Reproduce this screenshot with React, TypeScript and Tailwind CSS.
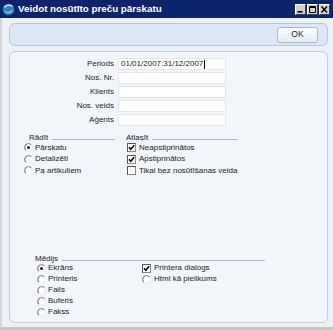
import React from "react";

const fields = [
  { label: "Periods", value: "01/01/2007:31/12/2007", caret: true },
  { label: "Nos. Nr.", value: "" },
  { label: "Klients", value: "" },
  { label: "Nos. veids", value: "" },
  { label: "Aģents", value: "" },
];

function Radio({ checked = false }: { checked?: boolean }) {
  return (
    <svg width="9" height="9" viewBox="0 0 12 12" className="shrink-0">
      <circle cx="6" cy="6" r="5" fill="#ffffff" stroke="#e4e4e4" />
      <path d="M2.46 9.54 A5 5 0 0 1 9.54 2.46" stroke="#7a7a7a" strokeWidth="1.4" fill="none" />
      {checked && <circle cx="6" cy="6" r="2" fill="#111111" />}
    </svg>
  );
}

function Check({ checked = false }: { checked?: boolean }) {
  return (
    <svg width="9" height="9" viewBox="0 0 9 9" className="shrink-0">
      <rect x="0.5" y="0.5" width="8" height="8" fill="#ffffff" stroke="#8a8a8a" />
      <path d="M0.5 8.5 V0.5 H8.5" stroke="#555555" fill="none" />
      {checked && (
        <path d="M2 4.3 L3.8 6.3 L7.2 2.3" stroke="#000000" strokeWidth="1.5" fill="none" />
      )}
    </svg>
  );
}

function SectionHead({ title, className = "" }: { title: string; className?: string }) {
  return (
    <div className={`flex items-end h-[9px] ${className}`}>
      <span className="leading-[9px]">{title}</span>
      <div className="flex-1 ml-[4px] mb-[2px] border-b border-[#aeb6c2]" />
    </div>
  );
}

function WinButton({ kind }: { kind: "min" | "max" | "close" }) {
  return (
    <div className="w-[11px] h-[11px] bg-[#d4d0c8] border-t border-l border-t-white border-l-white border-b border-r border-b-[#404040] border-r-[#404040] flex items-center justify-center">
      <svg width="9" height="9" viewBox="0 0 9 9">
        {kind === "min" && <rect x="1.5" y="6" width="5" height="1.6" fill="#000" />}
        {kind === "max" && (
          <path d="M1.5 1.5 H7.5 V7.5 H1.5 Z M1.5 2.5 H7.5" stroke="#000" fill="none" />
        )}
        {kind === "close" && (
          <path d="M1.5 1.5 L7 7.5 M7 1.5 L1.5 7.5" stroke="#000" strokeWidth="1.4" />
        )}
      </svg>
    </div>
  );
}

export default function App() {
  return (
    <div className="w-[333px] h-[330px] flex flex-col bg-[#edf0f5] font-['Liberation_Sans',Arial,sans-serif] text-[8px] text-[#1c1c1c] overflow-hidden">
      {/* Title bar */}
      <div className="h-[18px] shrink-0 flex items-center bg-[#0b256c] pl-[2px] pr-[2px]">
        <svg width="13" height="13" viewBox="0 0 13 13" className="shrink-0">
          <circle cx="6.5" cy="6.5" r="5.8" fill="#2f7fc4" />
          <path d="M2.5 4.5 C4 2 8 1.5 10.5 3.5" stroke="#bfe6ff" strokeWidth="1.6" fill="none" />
          <path d="M3 8.5 C5 10 8 10 10.5 7.5" stroke="#8fd0f0" strokeWidth="1.2" fill="none" />
        </svg>
        <span className="ml-[3px] text-white font-bold text-[9.8px]">Veidot nosūtīto preču pārskatu</span>
        <div className="ml-auto flex gap-[1px] mr-[1px]">
          <WinButton kind="min" />
          <WinButton kind="max" />
          <WinButton kind="close" />
        </div>
      </div>

      {/* Body */}
      <div className="flex-1 flex flex-col pl-[7px] pr-[5px] pt-[5px] pb-[4px] border-l-2 border-[#d4d8de] border-b-[3px] border-b-[#c4c6ca]">
        {/* Button bar */}
        <div className="h-[23px] shrink-0 flex items-center justify-end pr-[9px] bg-[#dce6f5] border border-[#b6c7e2] rounded-[6px]">
          <div className="w-[41px] h-[16px] flex items-center justify-center rounded-[3px] border border-[#a9b8cf] bg-gradient-to-b from-[#ffffff] to-[#e6ebf2] text-[8.5px] text-[#222]">
            OK
          </div>
        </div>

        {/* Main panel */}
        <div className="mt-[5px] flex-1 flex flex-col bg-[#f2f5fa] border border-[#c3d0e4] rounded-[6px] pt-[6px]">
          <div className="flex flex-col gap-[2px]">
            {fields.map((f) => (
              <div key={f.label} className="flex items-center h-[12px]">
                <span className="w-[104px] text-right">{f.label}</span>
                <div className="ml-[4px] w-[108px] h-[12px] bg-white border border-[#e3e8ef] flex items-center pl-[2px] leading-none">
                  {f.value}
                  {f.caret && <span className="w-[1px] h-[9px] bg-black ml-[1px]" />}
                </div>
              </div>
            ))}
          </div>

          {/* Rādīt / Atlasīt */}
          <div className="mt-[7px] flex">
            <div className="ml-[14px] w-[102px] flex flex-col">
              <SectionHead title="Rādīt" className="pl-[5px] mr-[11px]" />
              {["Pārskatu", "Detalizēti", "Pa artikuliem"].map((t, i) => (
                <div key={t} className="h-[11.5px] flex items-center gap-[2px]">
                  <Radio checked={i === 0} />
                  <span>{t}</span>
                </div>
              ))}
            </div>
            <div className="w-[112px] flex flex-col">
              <SectionHead title="Atlasīt" />
              {[
                ["Neapstiprinātos", true],
                ["Apstiprinātos", true],
                ["Tikai bez nosūtīšanas veida", false],
              ].map(([t, c]) => (
                <div key={t as string} className="h-[11.5px] flex items-center gap-[3px] pl-[1px] whitespace-nowrap">
                  <Check checked={c as boolean} />
                  <span>{t as string}</span>
                </div>
              ))}
            </div>
          </div>

          {/* Mēdijs */}
          <div className="mt-[77px] ml-[25px] w-[230px] flex flex-col">
            <SectionHead title="Mēdijs" />
            <div className="flex pl-[2px]">
              <div className="w-[105px] flex flex-col">
                {["Ekrāns", "Printeris", "Fails", "Buferis", "Fakss"].map((t, i) => (
                  <div key={t} className="h-[11px] flex items-center gap-[2px]">
                    <Radio checked={i === 0} />
                    <span>{t}</span>
                  </div>
                ))}
              </div>
              <div className="flex flex-col">
                <div className="h-[11px] flex items-center gap-[3px]">
                  <Check checked />
                  <span>Printera dialogs</span>
                </div>
                <div className="h-[11px] flex items-center gap-[3px]">
                  <Radio />
                  <span>Html kā pielikums</span>
                </div>
              </div>
            </div>
          </div>
        </div>
      </div>
    </div>
  );
}
